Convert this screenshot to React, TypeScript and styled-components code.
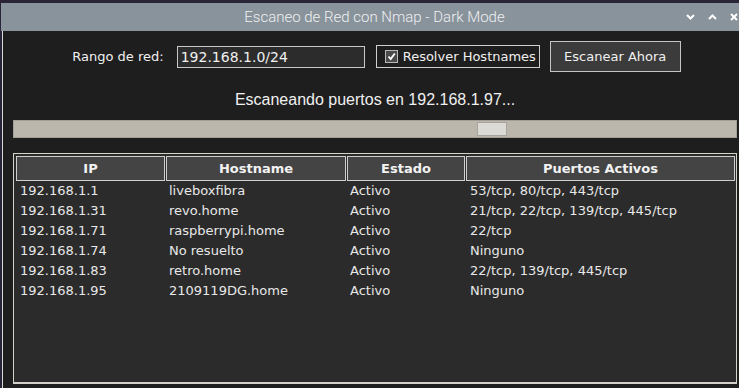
import React from 'react';
import styled, { createGlobalStyle } from 'styled-components';

const GlobalStyle = createGlobalStyle`
  html, body {
    margin: 0;
    padding: 0;
    background: #2a2438;
    overflow: hidden;
  }
  body {
    width: 739px;
    height: 388px;
  }
`;

const hosts = [
  { ip: '192.168.1.1', host: 'liveboxfibra', estado: 'Activo', ports: '53/tcp, 80/tcp, 443/tcp' },
  { ip: '192.168.1.31', host: 'revo.home', estado: 'Activo', ports: '21/tcp, 22/tcp, 139/tcp, 445/tcp' },
  { ip: '192.168.1.71', host: 'raspberrypi.home', estado: 'Activo', ports: '22/tcp' },
  { ip: '192.168.1.74', host: 'No resuelto', estado: 'Activo', ports: 'Ninguno' },
  { ip: '192.168.1.83', host: 'retro.home', estado: 'Activo', ports: '22/tcp, 139/tcp, 445/tcp' },
  { ip: '192.168.1.95', host: '2109119DG.home', estado: 'Activo', ports: 'Ninguno' },
];

const Screen = styled.div`
  padding: 3px 0 0 1px;
  height: 388px;
  box-sizing: border-box;
`;

const Window = styled.div`
  width: 747px;
  height: 385px;
  display: flex;
  flex-direction: column;
`;

const TitleBar = styled.div`
  height: 28px;
  flex: none;
  background: #89939b;
  display: flex;
  align-items: center;
  justify-content: center;
  position: relative;
  color: #eef0f2;
  font-family: Roboto, "Liberation Sans", sans-serif;
  font-weight: 300;
  font-size: 15px;
`;

const Controls = styled.div`
  position: absolute;
  right: 10px;
  top: 0;
  height: 100%;
  display: flex;
  align-items: center;
  gap: 13px;
`;

const Body = styled.div`
  flex: 1;
  background: #1e1e1e;
  border-left: 1px solid #d8d8d8;
  margin-left: 1px;
  display: flex;
  flex-direction: column;
  padding: 0 11px 0 10px;
  font-family: "DejaVu Sans", sans-serif;
  font-size: 13px;
  color: #f0f0f0;
`;

const FormRow = styled.div`
  display: flex;
  align-items: center;
  justify-content: center;
  height: 31px;
  margin-top: 10px;
  padding-left: 3px;
`;

const Label = styled.span`
  margin-right: 13px;
`;

const Entry = styled.div`
  width: 183px;
  height: 20px;
  border: 1px solid #c8c8c8;
  background: #2c2c2c;
  font-size: 14px;
  line-height: 20px;
  padding-left: 3px;
  margin-right: 11px;
  margin-top: 1px;
`;

const CheckFrame = styled.div`
  width: 164px;
  height: 23px;
  box-sizing: border-box;
  border: 1px solid #d0d0d0;
  display: flex;
  align-items: center;
  gap: 5px;
  padding-left: 8px;
  margin-right: 10px;
`;

const CheckBox = styled.span`
  width: 11px;
  height: 11px;
  border: 1px solid #b8b8b8;
  background: #4a4a4a;
  display: flex;
  align-items: center;
  justify-content: center;
`;

const Button = styled.div`
  width: 131px;
  height: 31px;
  box-sizing: border-box;
  border: 1px solid #c4c4c4;
  background: #3b3b3b;
  display: flex;
  align-items: center;
  justify-content: center;
`;

const Status = styled.div`
  font-family: "Liberation Sans", Arial, sans-serif;
  font-size: 16px;
  text-align: center;
  margin-top: 18px;
  height: 20px;
  line-height: 20px;
`;

const Progress = styled.div`
  margin-top: 10px;
  height: 18px;
  flex: none;
  box-sizing: border-box;
  border: 1px solid #a29e95;
  background: #bbb7ad;
  display: flex;
  align-items: center;
`;

const Thumb = styled.div`
  width: 30px;
  height: 14px;
  box-sizing: border-box;
  border: 1px solid #a8a49c;
  background: #dcdad5;
`;

const Table = styled.div`
  margin-top: 15px;
  height: 231px;
  flex: none;
  box-sizing: border-box;
  border: 1px solid #d4d1ca;
  border-bottom-width: 2px;
  background: #2b2b2b;
  padding: 2px 1px 0 2px;
`;

const Grid = styled.div`
  display: grid;
  grid-template-columns: 149px 180px 118px 1fr;
  column-gap: 1px;
`;

const Heading = styled.div`
  height: 25px;
  box-sizing: border-box;
  border: 1px solid #cfcfcf;
  background: #444444;
  font-weight: bold;
  display: flex;
  align-items: center;
  justify-content: center;
  color: #f2f2f2;
`;

const Cell = styled.div<{ $pad: number }>`
  height: 20px;
  line-height: 20px;
  padding-left: ${p => p.$pad}px;
  color: #e8e8e8;
  white-space: nowrap;
`;

function Chevron({ up }: { up?: boolean }) {
  return (
    <svg width="9" height="6" viewBox="0 0 9 6">
      <path d={up ? 'M1 5 L4.5 1.5 L8 5' : 'M1 1 L4.5 4.5 L8 1'} stroke="#ffffff" strokeWidth="2" fill="none" />
    </svg>
  );
}

export default function App() {
  const progress = 0.64;
  return (
    <>
      <GlobalStyle />
      <Screen>
        <Window>
          <TitleBar>
            Escaneo de Red con Nmap - Dark Mode
            <Controls>
              <Chevron />
              <Chevron up />
              <svg width="8" height="8" viewBox="0 0 8 8">
                <path d="M1 1 L7 7 M7 1 L1 7" stroke="#ffffff" strokeWidth="2" />
              </svg>
            </Controls>
          </TitleBar>
          <Body>
            <FormRow>
              <Label>Rango de red:</Label>
              <Entry>192.168.1.0/24</Entry>
              <CheckFrame>
                <CheckBox>
                  <svg width="9" height="9" viewBox="0 0 9 9">
                    <path d="M1.5 4.5 L3.7 7 L7.8 1.5" stroke="#ffffff" strokeWidth="1.8" fill="none" />
                  </svg>
                </CheckBox>
                Resolver Hostnames
              </CheckFrame>
              <Button>Escanear Ahora</Button>
            </FormRow>
            <Status>Escaneando puertos en 192.168.1.97...</Status>
            <Progress>
              <Thumb style={{ marginLeft: `${Math.round(progress * 724)}px` }} />
            </Progress>
            <Table>
              <Grid>
                <Heading>IP</Heading>
                <Heading>Hostname</Heading>
                <Heading>Estado</Heading>
                <Heading>Puertos Activos</Heading>
                {hosts.map(h => (
                  <React.Fragment key={h.ip}>
                    <Cell $pad={4}>{h.ip}</Cell>
                    <Cell $pad={3}>{h.host}</Cell>
                    <Cell $pad={3}>{h.estado}</Cell>
                    <Cell $pad={4}>{h.ports}</Cell>
                  </React.Fragment>
                ))}
              </Grid>
            </Table>
          </Body>
        </Window>
      </Screen>
    </>
  );
}
